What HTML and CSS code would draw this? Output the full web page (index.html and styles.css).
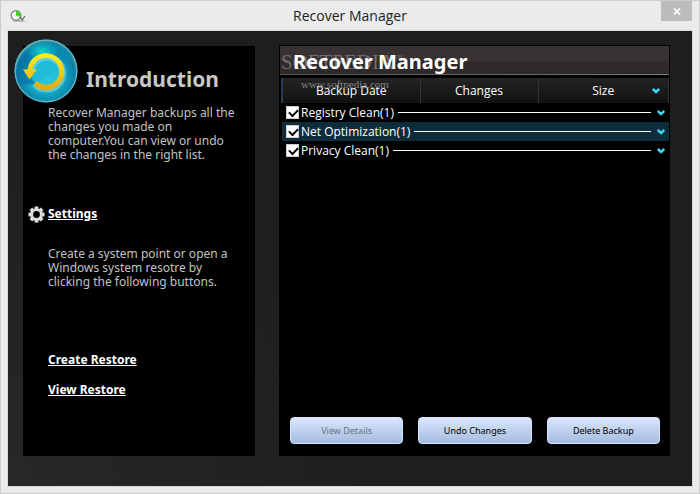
FILE: index.html
```html
<!DOCTYPE html>
<html lang="en">
<head>
<meta charset="utf-8">
<title>Recover Manager</title>
<link rel="stylesheet" href="styles.css">
</head>
<body>
<div class="window">
  <header class="titlebar">
    <svg class="app-icon" viewBox="0 0 16 14" aria-hidden="true">
      <ellipse cx="9" cy="12" rx="6" ry="1" fill="#bbb"/>
      <circle cx="6" cy="6.500" r="4.800" fill="#f4f4f4" stroke="#888" stroke-width="1.400"/>
      <path d="M6 6.500V1.500A5 5 0 0 1 10.500 8z" fill="#3fd321"/>
      <path d="M10 8l3 3.500M15 7l-3 4" stroke="#666" stroke-width="1.200" fill="none"/>
    </svg>
    <h1 class="window-title">Recover Manager</h1>
    <button class="close" type="button" aria-label="Close">
      <svg viewBox="0 0 8 7" aria-hidden="true"><path d="M1 .5l6 6M7 .5l-6 6" stroke="#fff" stroke-width="1.700"/></svg>
    </button>
  </header>
  <main class="client">
    <section class="panel intro">
      <svg class="orb" viewBox="0 0 64 64" aria-hidden="true">
        <defs>
          <radialGradient id="glass" cx=".5" cy=".58" r=".52">
            <stop offset="0" stop-color="#35d5ea"/>
            <stop offset=".55" stop-color="#12a6c4"/>
            <stop offset=".88" stop-color="#0b7fa5"/>
            <stop offset="1" stop-color="#2b8c9f"/>
          </radialGradient>
          <radialGradient id="glow" cx=".5" cy=".5" r=".5">
            <stop offset="0" stop-color="#10d0cd"/>
            <stop offset="1" stop-color="#10d0cd" stop-opacity="0"/>
          </radialGradient>
          <linearGradient id="shade" x1="0" y1="0" x2="1" y2="0">
            <stop offset="0" stop-color="#0567a4"/>
            <stop offset="1" stop-color="#0791b8"/>
          </linearGradient>
          <linearGradient id="gold" x1="0" y1="0" x2="0" y2="1">
            <stop offset="0" stop-color="#fff21a"/>
            <stop offset="1" stop-color="#e0a810"/>
          </linearGradient>
        </defs>
        <circle cx="32" cy="32" r="31.500" fill="url(#glass)"/>
        <path d="M2 41C1 17 16 2 36 3c12 0 20 7 23 14C48 28 30 46 8 46z" fill="url(#shade)" opacity=".65"/>
        <ellipse cx="28" cy="12" rx="17" ry="10" fill="url(#glow)"/>
        <circle cx="32" cy="32" r="16" fill="#25c4df" opacity=".8"/>
        <path d="M17 31A16 16 0 1 1 21 45" fill="none" stroke="#a5eef0" stroke-width="7" opacity=".45"/>
        <path d="M13.500 30.500A18.500 18.500 0 1 1 19.500 46.500l3-4.500A13.500 13.500 0 1 0 18.500 30.500h4.500L15.500 40.500 9 30.500z" fill="url(#gold)"/>
        <circle cx="32" cy="32" r="30.800" fill="none" stroke="#71bdc8" stroke-width="1.400" opacity=".8"/>
      </svg>
      <h2 class="intro-title">Introduction</h2>
      <p class="copy about">Recover Manager backups all the changes you made on computer.You can view or undo the changes in the right list.</p>
      <a class="link settings" href="#settings">
        <svg class="gear" viewBox="-9 -9 18 18" aria-hidden="true">
          <g fill="#ddd">
            <rect x="-2" y="-8.500" width="4" height="17"/>
            <rect x="-2" y="-8.500" width="4" height="17" transform="rotate(45)"/>
            <rect x="-2" y="-8.500" width="4" height="17" transform="rotate(90)"/>
            <rect x="-2" y="-8.500" width="4" height="17" transform="rotate(135)"/>
            <circle r="6.700"/>
          </g>
          <circle r="3.600" fill="#000"/>
        </svg>
        <span>Settings</span>
      </a>
      <p class="copy restore-info">Create a system point or open a Windows system resotre by clicking the following buttons.</p>
      <a class="link create" href="#create">Create Restore</a>
      <a class="link" href="#view">View Restore</a>
    </section>
    <section class="panel manager">
      <div class="banner">
        <div class="watermark" aria-hidden="true">SOFTPEDIA<sup>™</sup></div>
        <h2>Recover Manager</h2>
      </div>
      <div class="list">
        <div class="watermark-url" aria-hidden="true">www.softpedia.com</div>
        <table>
          <colgroup><col class="col-date"><col class="col-changes"><col></colgroup>
          <thead>
            <tr>
              <th scope="col">Backup Date</th>
              <th scope="col">Changes</th>
              <th scope="col" class="size">Size<svg class="chevron" viewBox="0 0 8 6" aria-hidden="true"><path d="M.7 1l3.300 3 3.300-3"/></svg></th>
            </tr>
          </thead>
          <tbody>
            <tr><td colspan="3"><div class="group"><label><input type="checkbox" checked>Registry Clean(1)</label><span class="rule"></span><svg class="chevron" viewBox="0 0 8 6" aria-hidden="true"><path d="M.7 1l3.300 3 3.300-3"/></svg></div></td></tr>
            <tr class="selected"><td colspan="3"><div class="group"><label><input type="checkbox" checked>Net Optimization(1)</label><span class="rule"></span><svg class="chevron" viewBox="0 0 8 6" aria-hidden="true"><path d="M.7 1l3.300 3 3.300-3"/></svg></div></td></tr>
            <tr><td colspan="3"><div class="group"><label><input type="checkbox" checked>Privacy Clean(1)</label><span class="rule"></span><svg class="chevron" viewBox="0 0 8 6" aria-hidden="true"><path d="M.7 1l3.300 3 3.300-3"/></svg></div></td></tr>
          </tbody>
        </table>
      </div>
      <div class="actions">
        <button type="button" disabled>View Details</button>
        <button type="button">Undo Changes</button>
        <button type="button">Delete Backup</button>
      </div>
    </section>
  </main>
</div>
</body>
</html>
```
FILE: styles.css
```css
* { box-sizing: border-box; }

body {
  margin: 0;
  font-family: "Noto Sans", "Open Sans", sans-serif;
  font-size: 12px;
}

h1, h2, p { margin: 0; }

.window {
  display: flex;
  flex-direction: column;
  min-height: 100vh;
  padding: 0 6px 6px;
  border: 1px solid #cdcdcd;
  background: #ebebeb;
}

.titlebar {
  display: grid;
  grid-template-columns: 32px 1fr 32px;
  height: 29px;
}

.app-icon { width: 16px; height: 14px; margin: 8px 0 0 3px; }

.window-title {
  color: #222;
  font: 14px/30px "Open Sans", sans-serif;
  text-align: center;
}

.close {
  display: flex;
  align-items: center;
  justify-content: center;
  width: 31px;
  height: 20px;
  padding: 0;
  border: 0;
  background: #bcbcbc;
}

.close svg { width: 8px; height: 7px; }

.client {
  display: grid;
  flex: 1;
  grid-template-columns: 232fr 391fr;
  gap: 24px;
  padding: 14px 22px 30px 15px;
  border: 1px solid #d8dada;
  background: radial-gradient(circle at 0 100%, #262829, #1e1e1e 45%);
}

.panel {
  position: relative;
  display: flex;
  flex-direction: column;
  min-width: 0;
  background: #000;
}

.intro {
  align-items: flex-start;
  margin-top: 1px;
  padding: 16px 15px 16px 25px;
}

.orb {
  position: absolute;
  top: -7px;
  left: -9px;
  width: 64px;
  height: 64px;
}

.intro-title {
  margin-left: 38px;
  color: #c8c8c8;
  font: bold 21px/34px "Noto Sans", sans-serif;
}

.copy { color: #c2c2c2; line-height: 14px; }

.about { margin-top: 10px; }

.link {
  color: #fff;
  font-size: 12px;
  font-weight: bold;
  line-height: 18px;
}

.settings {
  display: flex;
  align-items: center;
  gap: 3px;
  margin: 43px 0 24px -20px;
}

.gear { width: 17px; height: 17px; }

.create { margin: 62px 0 12px; }

.banner {
  position: relative;
  height: 32px;
  border: 1px solid #000;
  border-bottom-width: 2px;
  background:
    linear-gradient(90deg, #555, #777) bottom / 100% 1px no-repeat,
    linear-gradient(#383233 50%, #2f292a 50%);
}

.banner h2 {
  position: relative;
  padding-left: 13px;
  color: #fff;
  font: bold 20px/32px "Noto Sans", sans-serif;
}

.watermark {
  position: absolute;
  top: 2px;
  left: 1px;
  color: #706c6d;
  font: 21px/28px "Liberation Serif", serif;
  white-space: nowrap;
}

.watermark sup { font-size: 9px; line-height: 9px; }

.watermark-url {
  position: absolute;
  top: -1px;
  left: 22px;
  color: #858585;
  font: 11px/14px "Liberation Serif", serif;
}

.list {
  position: relative;
  flex: 1;
  margin-top: 1px;
  padding: 0 1px 0 2px;
}

table { width: 100%; border-collapse: collapse; table-layout: fixed; }

.col-date { width: 138px; }
.col-changes { width: 118px; }

th {
  height: 25px;
  padding: 0;
  border-right: 1px solid #353535;
  background: linear-gradient(#242424, #111);
  color: #fff;
  font: 12px/24px "Open Sans", sans-serif;
}

th:first-child { border-left: 2px solid #303858; }

.size { position: relative; }

.size .chevron { position: absolute; top: 10px; right: 8px; }

td { height: 19px; padding: 0; }

.selected { background: #0e2c3a; }

.group {
  display: flex;
  align-items: center;
  height: 19px;
  padding: 0 4px;
  color: #fff;
  font: 12px/18px "Open Sans", sans-serif;
}

label { display: flex; align-items: center; gap: 2px; }

input {
  appearance: none;
  width: 13px;
  height: 13px;
  margin: 0;
  border: 1px solid #ccc;
  background: #fff;
}

input:checked::before {
  content: "";
  display: block;
  width: 7px;
  height: 4px;
  margin: 2px;
  border: solid #000;
  border-width: 0 0 2px 2px;
  transform: rotate(-45deg);
}

.rule { flex: 1; height: 1px; margin: 0 6px 0 4px; background: #fff; }

.chevron {
  width: 8px;
  height: 6px;
  fill: none;
  stroke: #39d7f5;
  stroke-width: 2.5;
}

.actions {
  display: grid;
  grid-template-columns: repeat(3, 1fr);
  gap: 15px;
  padding: 0 10px 12px 11px;
}

.actions button {
  height: 27px;
  padding: 0;
  border: 1px solid #d5e5fb;
  border-radius: 4px;
  background: linear-gradient(#d9e7fd, #a5bbdf);
  color: #000;
  font: 9px/20px "Noto Sans", sans-serif;
}

.actions button:disabled { color: #68717f; }
```
